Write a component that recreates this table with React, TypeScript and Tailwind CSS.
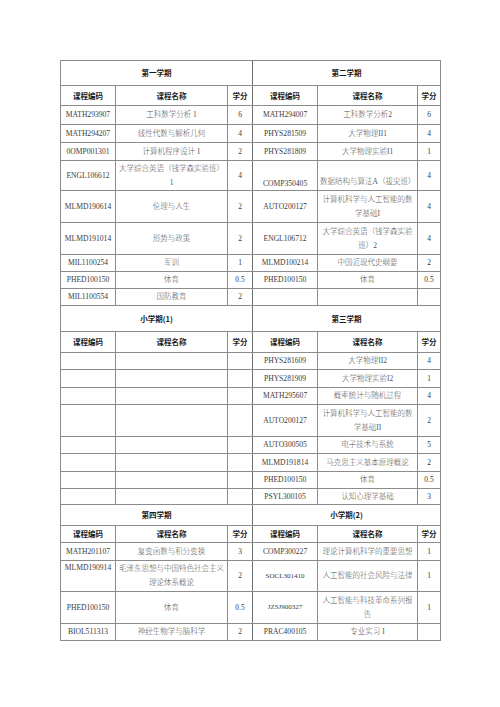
type Course = {
  code: string;
  name: string[];
  credit: string;
  codeAlign?: 'top' | 'bottom';
  nameAlign?: 'top' | 'bottom';
  small?: boolean;
};

type Row = { h: string; left?: Course; right?: Course };

type Block = {
  left: string;
  right: string;
  titleH: string;
  headH: string;
  rows: Row[];
};

const blocks: Block[] = [
  {
    left: '第一学期',
    right: '第二学期',
    titleH: 'h-[25px]',
    headH: 'h-[20px]',
    rows: [
      {
        h: 'h-[19px]',
        left: { code: 'MATH293907', name: ['工科数学分析 1'], credit: '6' },
        right: { code: 'MATH294007', name: ['工科数学分析2'], credit: '6' },
      },
      {
        h: 'h-[18px]',
        left: { code: 'MATH294207', name: ['线性代数与解析几何'], credit: '4' },
        right: { code: 'PHYS281509', name: ['大学物理II1'], credit: '4' },
      },
      {
        h: 'h-[18px]',
        left: { code: '0OMP001301', name: ['计算机程序设计 1'], credit: '2' },
        right: { code: 'PHYS281809', name: ['大学物理实验I1'], credit: '1' },
      },
      {
        h: 'h-[30px]',
        left: { code: 'ENGL106612', name: ['大学综合英语（钱学森实验班）', '1'], credit: '4' },
        right: {
          code: 'COMP350405',
          name: ['数据结构与算法A（拔尖班）'],
          credit: '4',
          codeAlign: 'bottom',
          nameAlign: 'bottom',
        },
      },
      {
        h: 'h-[32px]',
        left: { code: 'MLMD190614', name: ['伦理与人生'], credit: '2' },
        right: { code: 'AUTO200127', name: ['计算机科学与人工智能的数', '学基础I'], credit: '4' },
      },
      {
        h: 'h-[32px]',
        left: { code: 'MLMD191014', name: ['形势与政策'], credit: '2' },
        right: { code: 'ENGL106712', name: ['大学综合英语（钱学森实验', '班）2'], credit: '4' },
      },
      {
        h: 'h-[17px]',
        left: { code: 'MIL1100254', name: ['军训'], credit: '1' },
        right: { code: 'MLMD100214', name: ['中国近现代史纲要'], credit: '2' },
      },
      {
        h: 'h-[17px]',
        left: { code: 'PHED100150', name: ['体育'], credit: '0.5' },
        right: { code: 'PHED100150', name: ['体育'], credit: '0.5' },
      },
      {
        h: 'h-[17px]',
        left: { code: 'MIL1100554', name: ['国防教育'], credit: '2' },
      },
    ],
  },
  {
    left: '小学期(1)',
    right: '第三学期',
    titleH: 'h-[26px]',
    headH: 'h-[21px]',
    rows: [
      { h: 'h-[17px]', right: { code: 'PHYS281609', name: ['大学物理II2'], credit: '4' } },
      { h: 'h-[18px]', right: { code: 'PHYS281909', name: ['大学物理实验I2'], credit: '1' } },
      { h: 'h-[17px]', right: { code: 'MATH295607', name: ['概率统计与随机过程'], credit: '4' } },
      {
        h: 'h-[32px]',
        right: { code: 'AUTO200127', name: ['计算机科学与人工智能的数', '学基础II'], credit: '2' },
      },
      { h: 'h-[17px]', right: { code: 'AUTO300505', name: ['电子技术与系统'], credit: '5' } },
      { h: 'h-[18px]', right: { code: 'MLMD191814', name: ['马克思主义基本原理概论'], credit: '2' } },
      { h: 'h-[17px]', right: { code: 'PHED100150', name: ['体育'], credit: '0.5' } },
      { h: 'h-[16px]', right: { code: 'PSYL300105', name: ['认知心理学基础'], credit: '3' } },
    ],
  },
  {
    left: '第四学期',
    right: '小学期(2)',
    titleH: 'h-[21px]',
    headH: 'h-[17px]',
    rows: [
      {
        h: 'h-[18px]',
        left: { code: 'MATH201107', name: ['复变函数与积分变换'], credit: '3' },
        right: { code: 'COMP300227', name: ['理论计算机科学的重要思想'], credit: '1' },
      },
      {
        h: 'h-[31px]',
        left: {
          code: 'MLMD190914',
          name: ['毛泽东思想与中国特色社会主义', '理论体系概论'],
          credit: '2',
          codeAlign: 'top',
        },
        right: { code: 'SOCL301410', name: ['人工智能的社会风险与法律'], credit: '1', small: true },
      },
      {
        h: 'h-[32px]',
        left: { code: 'PHED100150', name: ['体育'], credit: '0.5' },
        right: {
          code: 'JZSJ900327',
          name: ['人工智能与科技革命系列报', '告'],
          credit: '1',
          small: true,
        },
      },
      {
        h: 'h-[17px]',
        left: { code: 'BIOL511313', name: ['神经生物学与脑科学'], credit: '2' },
        right: { code: 'PRAC400105', name: ['专业实习 I'], credit: '' },
      },
    ],
  },
];

const cell = 'border border-[#8c8c8c] px-[2px] text-center';

const valign = (a?: 'top' | 'bottom') =>
  a === 'top' ? 'align-top pt-[1px]' : a === 'bottom' ? 'align-bottom pb-[1px]' : 'align-middle';

function CourseCells({ c, divider }: { c?: Course; divider?: boolean }) {
  if (!c) {
    return (
      <>
        <td className={cell} />
        <td className={cell} />
        <td className={`${cell} ${divider ? 'border-r-[#6f6f6f]' : ''}`} />
      </>
    );
  }
  return (
    <>
      <td
        className={`${cell} ${valign(c.codeAlign)} whitespace-nowrap text-[#3a3a3a] ${
          c.small ? 'text-[7px]' : 'text-[7.6px]'
        }`}
      >
        {c.code}
      </td>
      <td className={`${cell} ${valign(c.nameAlign)} whitespace-nowrap font-light text-[#555]`}>
        {c.name.map((line, i) => (
          <div key={i} className="leading-[14px]">
            {line}
          </div>
        ))}
      </td>
      <td className={`${cell} align-middle text-[#3a3a3a] ${divider ? 'border-r-[#6f6f6f]' : ''}`}>
        {c.credit}
      </td>
    </>
  );
}

export default function App() {
  return (
    <div className="min-h-[707px] w-[500px] bg-white pl-[60px] pt-[60px] font-['Liberation_Serif','Noto_Sans_CJK_SC',serif] text-[7.5px] text-[#4a4a4a]">
      <table className="w-[380px] table-fixed border-collapse border border-[#6f6f6f]">
        <colgroup>
          <col className="w-[55px]" />
          <col className="w-[112px]" />
          <col className="w-[25px]" />
          <col className="w-[65px]" />
          <col className="w-[100px]" />
          <col className="w-[23px]" />
        </colgroup>
        <tbody>
          {blocks.map((b, bi) => (
            <Section key={bi} block={b} />
          ))}
        </tbody>
      </table>
    </div>
  );
}

function Section({ block }: { block: Block }) {
  const head = `${cell} align-middle font-bold text-[#1a1a1a] font-['Noto_Sans_CJK_SC',sans-serif]`;
  return (
    <>
      <tr className={block.titleH}>
        <td colSpan={3} className={`${head} border-r-[#6f6f6f]`}>
          {block.left}
        </td>
        <td colSpan={3} className={head}>
          {block.right}
        </td>
      </tr>
      <tr className={block.headH}>
        <td className={head}>课程编码</td>
        <td className={head}>课程名称</td>
        <td className={`${head} border-r-[#6f6f6f]`}>学分</td>
        <td className={head}>课程编码</td>
        <td className={head}>课程名称</td>
        <td className={head}>学分</td>
      </tr>
      {block.rows.map((r, i) => (
        <tr key={i} className={r.h}>
          <CourseCells c={r.left} divider />
          <CourseCells c={r.right} />
        </tr>
      ))}
    </>
  );
}
